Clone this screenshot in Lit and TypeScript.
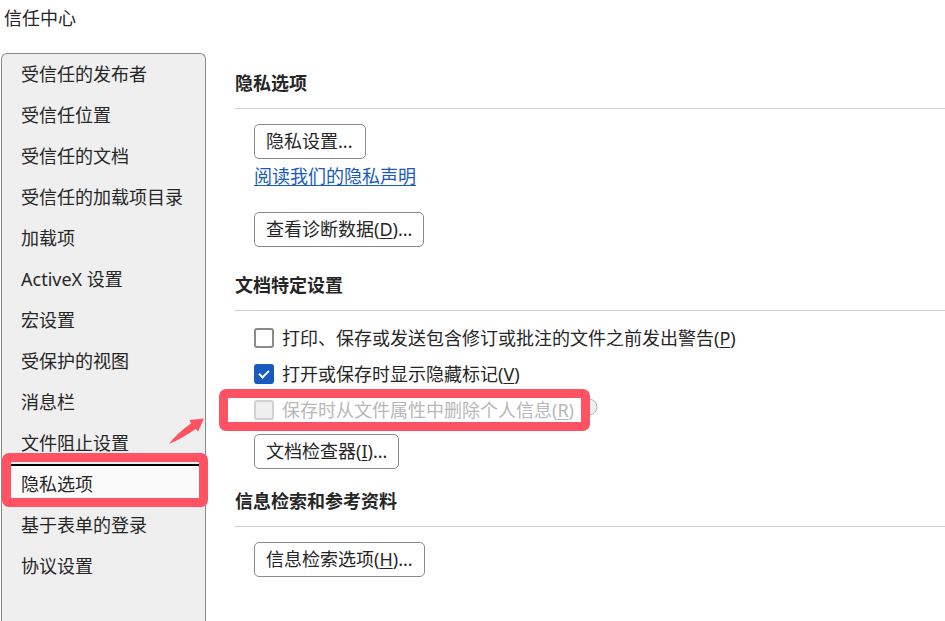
import { LitElement, html, css, svg, nothing } from "lit";
import { customElement, state } from "lit/decorators.js";
import { classMap } from "lit/directives/class-map.js";

const CATEGORIES = [
  "受信任的发布者",
  "受信任位置",
  "受信任的文档",
  "受信任的加载项目录",
  "加载项",
  "ActiveX 设置",
  "宏设置",
  "受保护的视图",
  "消息栏",
  "文件阻止设置",
  "隐私选项",
  "基于表单的登录",
  "协议设置",
];

const HIGHLIGHTED = "隐私选项";

@customElement("app-root")
export class AppRoot extends LitElement {
  @state() private selected = HIGHLIGHTED;

  static styles = css`
    :host {
      display: flex;
      flex-direction: column;
      min-height: 100vh;
      background: #fff;
      color: #262626;
      font: 18px/24px "Noto Sans", "Noto Sans CJK SC", sans-serif;
    }
    button {
      font: inherit;
      color: inherit;
      cursor: pointer;
    }
    .title {
      margin: 0;
      padding: 6px 4px 23px;
      font-size: 18px;
      font-weight: 400;
    }
    .layout {
      display: flex;
      flex: 1;
    }
    .nav {
      flex: none;
      box-sizing: border-box;
      width: 205px;
      margin-left: 1px;
      border: 1px solid #8a8a8a;
      border-bottom: 0;
      border-radius: 6px 6px 0 0;
      background: #efefef;
    }
    .list {
      list-style: none;
      margin: 0;
      padding: 0;
    }
    .entry {
      position: relative;
    }
    .item {
      display: block;
      box-sizing: border-box;
      width: 100%;
      height: 41px;
      padding: 0 19px 2px;
      border: 0;
      background: none;
      text-align: left;
      white-space: nowrap;
    }
    .item.current {
      border-top: 2px solid #000;
      padding-bottom: 4px;
      background: #fafafa;
    }
    .frame {
      position: absolute;
      box-sizing: border-box;
      border: 9px solid #ff5263;
      border-radius: 7px;
      pointer-events: none;
    }
    .frame-nav {
      inset: -11px -3px -2px 0;
    }
    .frame-option {
      inset: -9px -16px -9px -35px;
    }
    .arrow {
      position: absolute;
      right: 0;
      top: -47px;
      width: 38px;
      height: 27px;
      pointer-events: none;
    }
    .content {
      flex: 1;
      min-width: 0;
      padding: 18px 0 20px 29px;
    }
    .heading {
      margin: 0;
      padding-bottom: 13px;
      border-bottom: 1px solid #d0d0d0;
      font-size: 18px;
      font-weight: 700;
    }
    .body {
      display: flex;
      flex-direction: column;
      align-items: flex-start;
      padding: 15px 0 20px 19px;
    }
    .body.roomy {
      padding-bottom: 26px;
    }
    .push {
      min-width: 112px;
      height: 35px;
      padding: 0 11px 2px;
      border: 1px solid #8a8a8a;
      border-radius: 5px;
      background: #fff;
      text-align: left;
      white-space: nowrap;
    }
    .link {
      margin: 5px 0 24px;
      color: #185abd;
      text-underline-offset: 2px;
    }
    .options {
      display: flex;
      flex-direction: column;
      gap: 12px;
      margin-bottom: 12px;
    }
    .option {
      display: flex;
      align-items: center;
      gap: 6px;
      height: 24px;
    }
    .label {
      position: relative;
      display: flex;
      align-items: center;
      gap: 8px;
    }
    .disabled {
      color: #b8b8b8;
    }
    .check {
      flex: none;
      appearance: none;
      display: grid;
      width: 20px;
      height: 20px;
      margin: 0;
      border: 2px solid #8a8a8a;
      border-radius: 3px;
      background: #fff;
      box-sizing: border-box;
    }
    .check:checked {
      border-color: #185abd;
      background: #185abd;
    }
    .check:checked::before {
      content: "";
      place-self: center;
      width: 8px;
      height: 4px;
      border: solid #fff;
      border-width: 0 0 2px 2px;
      box-sizing: content-box;
      rotate: -45deg;
      translate: 0 -1px;
    }
    .check:disabled {
      border-color: #d0d0d0;
      background: #efefef;
    }
    .info {
      width: 18px;
      height: 18px;
      margin-bottom: 6px;
    }
    .key {
      text-decoration: underline;
      text-decoration-thickness: 1px;
      text-underline-offset: 2px;
    }
  `;

  private key(letter: string) {
    return html`(<span class="key">${letter}</span>)`;
  }

  private annotation() {
    return html`<span class="frame frame-nav"></span>
      <svg class="arrow" viewBox="0 0 38 27" aria-hidden="true">
        ${svg`<path d="M2 27 Q10 16 24 6.500 L22.500 3 L37 1.500 L31 14.500 L28.500 12 Q16 21 2 27 Z" fill="#ff5263" />`}
      </svg>`;
  }

  render() {
    return html`
      <h1 class="title">信任中心</h1>
      <div class="layout">
        <nav class="nav" aria-label="信任中心">
          <ul class="list">
            ${CATEGORIES.map(
              (name) => html`<li class="entry">
                <button
                  type="button"
                  class=${classMap({ item: true, current: name === this.selected })}
                  @click=${() => (this.selected = name)}
                >${name}</button>
                ${name === HIGHLIGHTED ? this.annotation() : nothing}
              </li>`
            )}
          </ul>
        </nav>
        <main class="content">
          <section>
            <h2 class="heading">隐私选项</h2>
            <div class="body roomy">
              <button type="button" class="push">隐私设置...</button>
              <a class="link" href="#privacy">阅读我们的隐私声明</a>
              <button type="button" class="push">查看诊断数据${this.key("D")}...</button>
            </div>
          </section>
          <section>
            <h2 class="heading">文档特定设置</h2>
            <div class="body">
              <div class="options">
                <div class="option">
                  <label class="label">
                    <input type="checkbox" class="check" />
                    <span>打印、保存或发送包含修订或批注的文件之前发出警告${this.key("P")}</span>
                  </label>
                </div>
                <div class="option">
                  <label class="label">
                    <input type="checkbox" class="check" checked />
                    <span>打开或保存时显示隐藏标记${this.key("V")}</span>
                  </label>
                </div>
                <div class="option">
                  <label class="label disabled">
                    <input type="checkbox" class="check" disabled />
                    <span>保存时从文件属性中删除个人信息${this.key("R")}</span>
                    <span class="frame frame-option"></span>
                  </label>
                  <svg class="info" viewBox="0 0 18 18" aria-hidden="true">
                    <circle cx="9" cy="9" r="8" fill="#efefef" stroke="#b8b8b8" stroke-width="1" />
                    <path d="M9 8v5M9 5v1" stroke="#b8b8b8" stroke-width="1" />
                  </svg>
                </div>
              </div>
              <button type="button" class="push">文档检查器${this.key("I")}...</button>
            </div>
          </section>
          <section>
            <h2 class="heading">信息检索和参考资料</h2>
            <div class="body">
              <button type="button" class="push">信息检索选项${this.key("H")}...</button>
            </div>
          </section>
        </main>
      </div>
    `;
  }
}
